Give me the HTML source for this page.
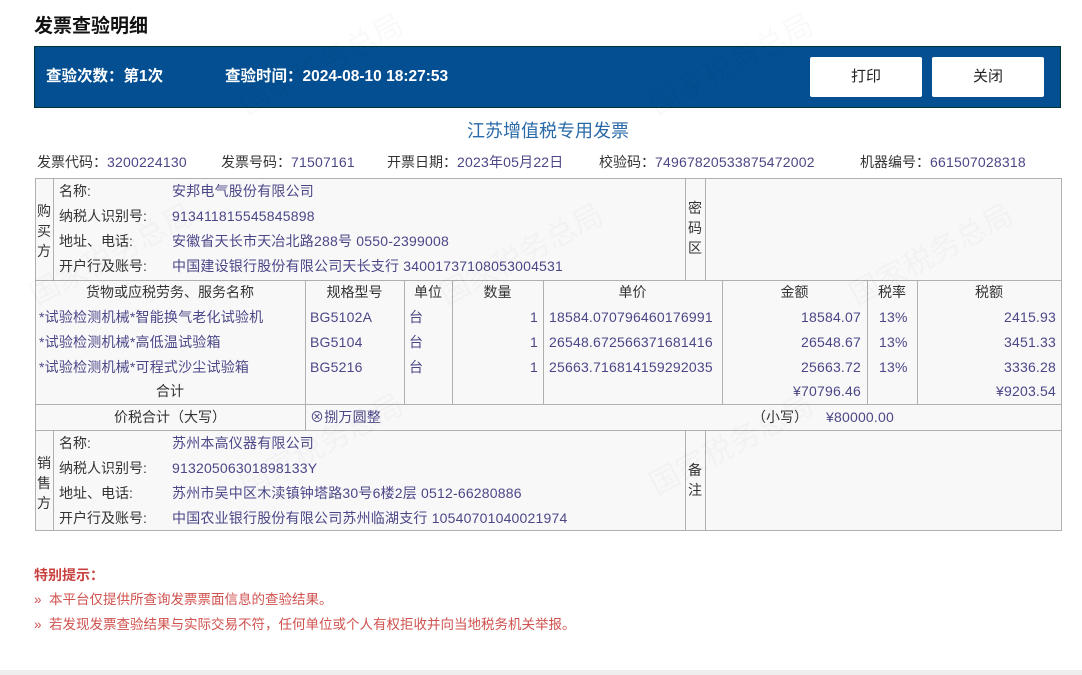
<!DOCTYPE html>
<html><head><meta charset="utf-8"><style>
*{margin:0;padding:0;box-sizing:border-box}
body{width:1082px;height:675px;background:#fff;position:relative;overflow:hidden;font-family:"Liberation Sans","Noto Sans CJK SC",sans-serif;font-size:14px;color:#333}
.a{position:absolute;white-space:nowrap;line-height:16px}
.v{color:#4b4787;letter-spacing:0.2px}
.h{position:absolute;height:1px;background:#b0b0b0}
.w{position:absolute;width:1px;background:#b0b0b0}
.r{text-align:right}
.c{text-align:center}
.btn{position:absolute;top:57px;width:112px;height:40px;background:#fff;border-radius:2px;font-size:15px;color:#222;text-align:center;line-height:40px}
.wm{position:absolute;color:rgba(0,0,0,0.025);font-size:30px;transform:rotate(-28deg);white-space:nowrap}
</style></head><body>
<div class="a" style="left:34px;top:14px;font-size:19px;font-weight:bold;color:#111;line-height:26px">发票查验明细</div>
<div style="position:absolute;left:34px;top:46px;width:1027px;height:62px;background:#044f92;border:1px solid #033"></div>
<div class="a" style="left:46px;top:68px;font-size:15.5px;color:#fff;line-height:18px;font-weight:bold">查验次数：第1次</div>
<div class="a" style="left:225px;top:68px;font-size:15.5px;color:#fff;line-height:18px;font-weight:bold">查验时间：2024-08-10 18:27:53</div>
<div class="btn" style="left:810px">打印</div>
<div class="btn" style="left:932px">关闭</div>
<div class="a" style="left:0;width:1096px;top:121px;font-size:18px;color:#2a6aa8;text-align:center;line-height:20px">江苏增值税专用发票</div>
<div class="a" style="left:37px;top:154px">发票代码：<span class="v">3200224130</span></div>
<div class="a" style="left:221px;top:154px">发票号码：<span class="v">71507161</span></div>
<div class="a" style="left:387px;top:154px">开票日期：<span class="v">2023年05月22日</span></div>
<div class="a" style="left:599px;top:154px">校验码：<span class="v">74967820533875472002</span></div>
<div class="a" style="left:860px;top:154px">机器编号：<span class="v">661507028318</span></div>

<div style="position:absolute;left:35px;top:178px;width:1027px;height:353px;background:#f8f8f9;border:1px solid #b0b0b0"></div>
<div class="h" style="left:35px;width:1026px;top:280px"></div>
<div class="h" style="left:35px;width:1026px;top:404px"></div>
<div class="h" style="left:35px;width:1026px;top:430px"></div>
<div class="w" style="left:53px;top:178px;height:102px"></div>
<div class="w" style="left:685px;top:178px;height:102px"></div>
<div class="w" style="left:705px;top:178px;height:102px"></div>
<div class="w" style="left:53px;top:430px;height:100px"></div>
<div class="w" style="left:685px;top:430px;height:100px"></div>
<div class="w" style="left:705px;top:430px;height:100px"></div>
<div class="w" style="left:305px;top:280px;height:150px"></div>
<div class="w" style="left:404px;top:280px;height:124px"></div>
<div class="w" style="left:452px;top:280px;height:124px"></div>
<div class="w" style="left:543px;top:280px;height:124px"></div>
<div class="w" style="left:722px;top:280px;height:124px"></div>
<div class="w" style="left:867px;top:280px;height:124px"></div>
<div class="w" style="left:917px;top:280px;height:124px"></div>

<div class="a" style="left:37px;top:201px;line-height:20px;white-space:normal;width:14px">购<br>买<br>方</div>
<div class="a" style="left:688px;top:198px;line-height:20px;white-space:normal;width:14px">密<br>码<br>区</div>
<div class="a" style="left:59px;top:183px">名称:</div>
<div class="a" style="left:59px;top:208px">纳税人识别号:</div>
<div class="a" style="left:59px;top:233px">地址、电话:</div>
<div class="a" style="left:59px;top:258px">开户行及账号:</div>
<div class="a v" style="left:172px;top:183px">安邦电气股份有限公司</div>
<div class="a v" style="left:172px;top:208px">913411815545845898</div>
<div class="a v" style="left:172px;top:233px">安徽省天长市天冶北路288号 0550-2399008</div>
<div class="a v" style="left:172px;top:258px">中国建设银行股份有限公司天长支行 34001737108053004531</div>

<div class="a c" style="left:35px;width:270px;top:284px">货物或应税劳务、服务名称</div>
<div class="a c" style="left:305px;width:99px;top:284px">规格型号</div>
<div class="a c" style="left:404px;width:48px;top:284px">单位</div>
<div class="a c" style="left:452px;width:91px;top:284px">数量</div>
<div class="a c" style="left:543px;width:179px;top:284px">单价</div>
<div class="a c" style="left:722px;width:145px;top:284px">金额</div>
<div class="a c" style="left:867px;width:50px;top:284px">税率</div>
<div class="a c" style="left:917px;width:144px;top:284px">税额</div>

<div class="a v" style="left:39px;top:309px">*试验检测机械*智能换气老化试验机</div>
<div class="a v" style="left:39px;top:334px">*试验检测机械*高低温试验箱</div>
<div class="a v" style="left:39px;top:359px">*试验检测机械*可程式沙尘试验箱</div>
<div class="a" style="left:35px;width:270px;top:383px;text-align:center">合计</div>
<div class="a v" style="left:310px;top:309px">BG5102A</div>
<div class="a v" style="left:310px;top:334px">BG5104</div>
<div class="a v" style="left:310px;top:359px">BG5216</div>
<div class="a v" style="left:409px;top:309px">台</div>
<div class="a v" style="left:409px;top:334px">台</div>
<div class="a v" style="left:409px;top:359px">台</div>
<div class="a v r" style="left:452px;width:86px;top:309px">1</div>
<div class="a v r" style="left:452px;width:86px;top:334px">1</div>
<div class="a v r" style="left:452px;width:86px;top:359px">1</div>
<div class="a v" style="left:549px;top:309px">18584.070796460176991</div>
<div class="a v" style="left:549px;top:334px">26548.672566371681416</div>
<div class="a v" style="left:549px;top:359px">25663.716814159292035</div>
<div class="a v r" style="left:722px;width:139px;top:309px">18584.07</div>
<div class="a v r" style="left:722px;width:139px;top:334px">26548.67</div>
<div class="a v r" style="left:722px;width:139px;top:359px">25663.72</div>
<div class="a v r" style="left:722px;width:139px;top:383px">¥70796.46</div>
<div class="a v" style="left:879px;top:309px">13%</div>
<div class="a v" style="left:879px;top:334px">13%</div>
<div class="a v" style="left:879px;top:359px">13%</div>
<div class="a v r" style="left:917px;width:139px;top:309px">2415.93</div>
<div class="a v r" style="left:917px;width:139px;top:334px">3451.33</div>
<div class="a v r" style="left:917px;width:139px;top:359px">3336.28</div>
<div class="a v r" style="left:917px;width:139px;top:383px">¥9203.54</div>

<div class="a c" style="left:35px;width:270px;top:409px">价税合计（大写）</div>
<div class="a v" style="left:310px;top:409px">⊗捌万圆整</div>
<div class="a" style="left:752px;top:409px">（小写）</div>
<div class="a v" style="left:826px;top:409px">¥80000.00</div>

<div class="a" style="left:37px;top:453px;line-height:20px;white-space:normal;width:14px">销<br>售<br>方</div>
<div class="a" style="left:688px;top:460px;line-height:20px;white-space:normal;width:14px">备<br>注</div>
<div class="a" style="left:59px;top:435px">名称:</div>
<div class="a" style="left:59px;top:460px">纳税人识别号:</div>
<div class="a" style="left:59px;top:485px">地址、电话:</div>
<div class="a" style="left:59px;top:510px">开户行及账号:</div>
<div class="a v" style="left:172px;top:435px">苏州本高仪器有限公司</div>
<div class="a v" style="left:172px;top:460px">91320506301898133Y</div>
<div class="a v" style="left:172px;top:485px">苏州市吴中区木渎镇钟塔路30号6楼2层 0512-66280886</div>
<div class="a v" style="left:172px;top:510px">中国农业银行股份有限公司苏州临湖支行 10540701040021974</div>

<div class="a" style="left:34px;top:567px;color:#c9413f;font-weight:bold">特别提示：</div>
<div class="a" style="left:34px;top:592px;color:#d0524f;font-size:13.5px">»&nbsp; 本平台仅提供所查询发票票面信息的查验结果。</div>
<div class="a" style="left:34px;top:617px;color:#d0524f;font-size:13.5px">»&nbsp; 若发现发票查验结果与实际交易不符，任何单位或个人有权拒收并向当地税务机关举报。</div>
<div style="position:absolute;left:0;top:670px;width:1082px;height:5px;background:#eee"></div>

<div class="wm" style="left:230px;top:40px">国家税务总局</div>
<div class="wm" style="left:640px;top:40px">国家税务总局</div>
<div class="wm" style="left:20px;top:230px">国家税务总局</div>
<div class="wm" style="left:430px;top:230px">国家税务总局</div>
<div class="wm" style="left:840px;top:230px">国家税务总局</div>
<div class="wm" style="left:230px;top:420px">国家税务总局</div>
<div class="wm" style="left:640px;top:420px">国家税务总局</div>
</body></html>
